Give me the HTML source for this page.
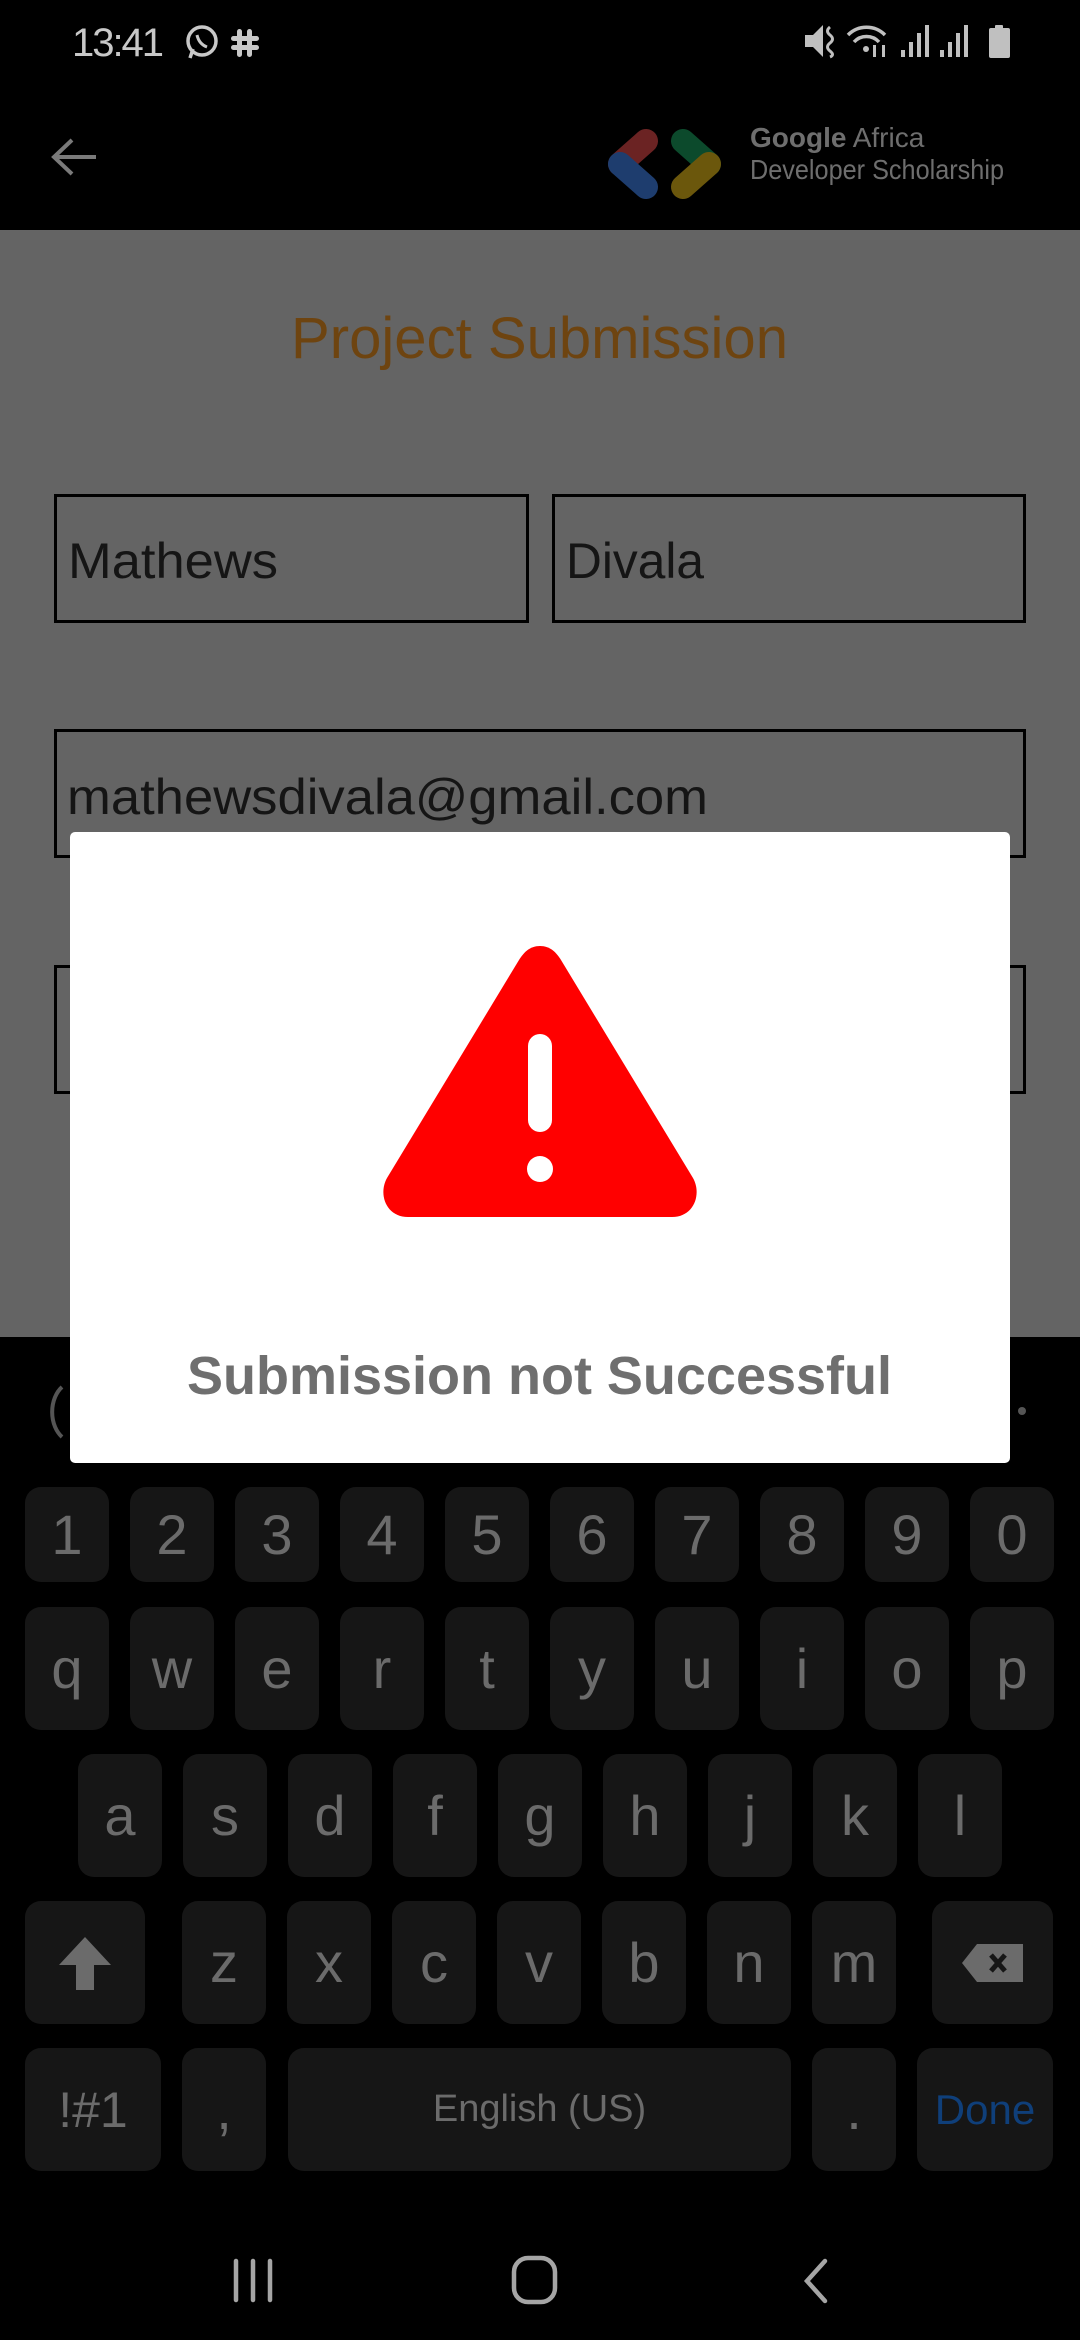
<!DOCTYPE html>
<html><head><meta charset="utf-8">
<style>
*{margin:0;padding:0;box-sizing:border-box}
html,body{width:1080px;height:2340px;background:#000;overflow:hidden;font-family:"Liberation Sans",sans-serif}
.abs{position:absolute}
.key{position:absolute;background:#161616;border-radius:16px;color:#6b6b6b;font-size:56px;display:flex;align-items:center;justify-content:center;font-family:"Liberation Sans",sans-serif}
.box{position:absolute;border:3px solid #000}
</style></head><body>
<!-- status bar -->
<svg class="abs" style="left:0;top:0" width="1080" height="230">
<text x="72" y="56" font-size="40" fill="#c8c8c8" textLength="92" font-family="Liberation Sans">13:41</text>
<circle cx="202" cy="41" r="14" fill="none" stroke="#c8c8c8" stroke-width="3.5"/>
<path d="M190 58 l3-9" stroke="#c8c8c8" stroke-width="3.5"/>
<path d="M197 35 q2 9 10 12" stroke="#c8c8c8" stroke-width="3" fill="none"/>
<g fill="#c8c8c8"><rect x="237" y="29" width="5" height="28" rx="2.5"/><rect x="247" y="29" width="5" height="28" rx="2.5"/><rect x="231" y="36" width="28" height="5" rx="2.5"/><rect x="231" y="45" width="28" height="5" rx="2.5"/></g>
<g fill="#c0c0c0">
<path d="M805 35 h8 l10-10 v32 l-10-10 h-8z"/>
<path d="M830 27 q-5 4 0 8 q5 4 0 8 q-5 4 0 8 q5 4 0 6" stroke="#c0c0c0" stroke-width="3" fill="none"/>
<path d="M848 35 a26 26 0 0 1 37 0" stroke="#c0c0c0" stroke-width="3.5" fill="none"/>
<path d="M854 42 a17 17 0 0 1 25 0" stroke="#c0c0c0" stroke-width="3.5" fill="none"/>
<circle cx="866" cy="49" r="3"/>
<rect x="873" y="45" width="3" height="12"/><rect x="882" y="45" width="3" height="12"/>
<rect x="901" y="50" width="4" height="7"/><rect x="909" y="42" width="4" height="15"/><rect x="917" y="33" width="4" height="24"/><rect x="925" y="25" width="4" height="32"/>
<rect x="940" y="50" width="4" height="7"/><rect x="948" y="42" width="4" height="15"/><rect x="956" y="33" width="4" height="24"/><rect x="964" y="25" width="4" height="32"/>
<rect x="995" y="25" width="8" height="4" rx="1"/><rect x="989" y="28" width="21" height="30" rx="2"/>
</g>
<!-- app bar -->
<path d="M56 157 h40 M72 140 l-18 17 l18 17" stroke="#7a7a7a" stroke-width="4" fill="none"/>
<g stroke-width="24" stroke-linecap="round" fill="none">
<path d="M646 141 L620 164" stroke="#6b2323"/>
<path d="M620 164 L646 187" stroke="#1e3d6e"/>
<path d="M683 141 L709 164" stroke="#0c4a2c"/>
<path d="M709 164 L683 187" stroke="#6b570c"/>
</g>
<text x="750" y="147" font-size="28" fill="#6e6e6e" font-family="Liberation Sans"><tspan font-weight="bold">Google</tspan> Africa</text>
<text x="750" y="179" font-size="28" fill="#6e6e6e" textLength="254" lengthAdjust="spacingAndGlyphs" font-family="Liberation Sans">Developer Scholarship</text>
</svg>
<!-- gray content -->
<div class="abs" style="left:0;top:230px;width:1080px;height:1107px;background:#646464"></div>
<svg class="abs" style="left:0;top:230px" width="1080" height="1107">
<text x="291" y="128" font-size="58" fill="#6e4410" textLength="497" lengthAdjust="spacingAndGlyphs" font-family="Liberation Sans">Project Submission</text>
<text x="68" y="348" font-size="50" fill="#151515" textLength="210" lengthAdjust="spacingAndGlyphs" font-family="Liberation Sans">Mathews</text>
<text x="566" y="348" font-size="50" fill="#151515" textLength="138" lengthAdjust="spacingAndGlyphs" font-family="Liberation Sans">Divala</text>
<text x="67" y="584" font-size="50" fill="#151515" textLength="641" lengthAdjust="spacingAndGlyphs" font-family="Liberation Sans">mathewsdivala@gmail.com</text>
</svg>
<div class="box" style="left:54px;top:494px;width:475px;height:129px"></div>
<div class="box" style="left:552px;top:494px;width:474px;height:129px"></div>
<div class="box" style="left:54px;top:729px;width:972px;height:129px"></div>
<div class="box" style="left:54px;top:965px;width:972px;height:129px"></div>
<!-- keyboard toolbar partial -->
<svg class="abs" style="left:0;top:1337px" width="1080" height="140">
<path d="M62 50 a22 30 0 0 0 0 50" stroke="#555" stroke-width="4" fill="none"/>
<circle cx="1022" cy="74" r="4" fill="#555"/>
</svg>
<!-- keys -->
<div class="key" style="left:25px;top:1487px;width:84px;height:95px">1</div>
<div class="key" style="left:130px;top:1487px;width:84px;height:95px">2</div>
<div class="key" style="left:235px;top:1487px;width:84px;height:95px">3</div>
<div class="key" style="left:340px;top:1487px;width:84px;height:95px">4</div>
<div class="key" style="left:445px;top:1487px;width:84px;height:95px">5</div>
<div class="key" style="left:550px;top:1487px;width:84px;height:95px">6</div>
<div class="key" style="left:655px;top:1487px;width:84px;height:95px">7</div>
<div class="key" style="left:760px;top:1487px;width:84px;height:95px">8</div>
<div class="key" style="left:865px;top:1487px;width:84px;height:95px">9</div>
<div class="key" style="left:970px;top:1487px;width:84px;height:95px">0</div>

<div class="key" style="left:25px;top:1607px;width:84px;height:123px">q</div>
<div class="key" style="left:130px;top:1607px;width:84px;height:123px">w</div>
<div class="key" style="left:235px;top:1607px;width:84px;height:123px">e</div>
<div class="key" style="left:340px;top:1607px;width:84px;height:123px">r</div>
<div class="key" style="left:445px;top:1607px;width:84px;height:123px">t</div>
<div class="key" style="left:550px;top:1607px;width:84px;height:123px">y</div>
<div class="key" style="left:655px;top:1607px;width:84px;height:123px">u</div>
<div class="key" style="left:760px;top:1607px;width:84px;height:123px">i</div>
<div class="key" style="left:865px;top:1607px;width:84px;height:123px">o</div>
<div class="key" style="left:970px;top:1607px;width:84px;height:123px">p</div>

<div class="key" style="left:78px;top:1754px;width:84px;height:123px">a</div>
<div class="key" style="left:183px;top:1754px;width:84px;height:123px">s</div>
<div class="key" style="left:288px;top:1754px;width:84px;height:123px">d</div>
<div class="key" style="left:393px;top:1754px;width:84px;height:123px">f</div>
<div class="key" style="left:498px;top:1754px;width:84px;height:123px">g</div>
<div class="key" style="left:603px;top:1754px;width:84px;height:123px">h</div>
<div class="key" style="left:708px;top:1754px;width:84px;height:123px">j</div>
<div class="key" style="left:813px;top:1754px;width:84px;height:123px">k</div>
<div class="key" style="left:918px;top:1754px;width:84px;height:123px">l</div>

<div class="key" style="left:25px;top:1901px;width:120px;height:123px"><svg width="60" height="60" viewBox="0 0 60 60"><path d="M30 4 L56 32 H39 V57 H21 V32 H4 Z" fill="#6b6b6b"/></svg></div>
<div class="key" style="left:182px;top:1901px;width:84px;height:123px">z</div>
<div class="key" style="left:287px;top:1901px;width:84px;height:123px">x</div>
<div class="key" style="left:392px;top:1901px;width:84px;height:123px">c</div>
<div class="key" style="left:497px;top:1901px;width:84px;height:123px">v</div>
<div class="key" style="left:602px;top:1901px;width:84px;height:123px">b</div>
<div class="key" style="left:707px;top:1901px;width:84px;height:123px">n</div>
<div class="key" style="left:812px;top:1901px;width:84px;height:123px">m</div>
<div class="key" style="left:932px;top:1901px;width:121px;height:123px"><svg width="64" height="40" viewBox="0 0 64 40"><path d="M16 1 H62 V39 H16 L1 20 Z" fill="#6b6b6b"/><path d="M30 12 L44 28 M44 12 L30 28" stroke="#161616" stroke-width="5"/></svg></div>

<div class="key" style="left:25px;top:2048px;width:136px;height:123px;font-size:50px">!#1</div>
<div class="key" style="left:182px;top:2048px;width:84px;height:123px">,</div>
<div class="key" style="left:288px;top:2048px;width:503px;height:123px;font-size:38px">English (US)</div>
<div class="key" style="left:812px;top:2048px;width:84px;height:123px">.</div>
<div class="key" style="left:917px;top:2048px;width:136px;height:123px;font-size:42px;color:#0f3f7a">Done</div>

<!-- nav bar -->
<svg class="abs" style="left:0;top:2240px" width="1080" height="100">
<g stroke="#a5a5a5" stroke-width="4.5" fill="none" stroke-linecap="round">
<path d="M236 21 V60 M253 21 V60 M270 21 V60"/>
<rect x="514" y="18" width="41" height="44" rx="14"/>
<path d="M825 21 L807 41 L825 61"/>
</g>
</svg>

<!-- dialog -->
<div class="abs" style="left:70px;top:832px;width:940px;height:631px;background:#fff;border-radius:5px"></div>
<svg class="abs" style="left:0;top:832px" width="1080" height="631">
<path d="M540 114 C530 114 524 120 519 128 L387 346 C378 362 386 385 408 385 L672 385 C694 385 702 362 693 346 L561 128 C556 120 550 114 540 114 Z" fill="#ff0000"/>
<rect x="528" y="202" width="24" height="98" rx="12" fill="#fff"/>
<circle cx="540" cy="337" r="13" fill="#fff"/>
<text x="187" y="562" font-size="54" font-weight="bold" fill="#6f6f6f" textLength="705" lengthAdjust="spacingAndGlyphs" font-family="Liberation Sans">Submission not Successful</text>
</svg>
</body></html>
